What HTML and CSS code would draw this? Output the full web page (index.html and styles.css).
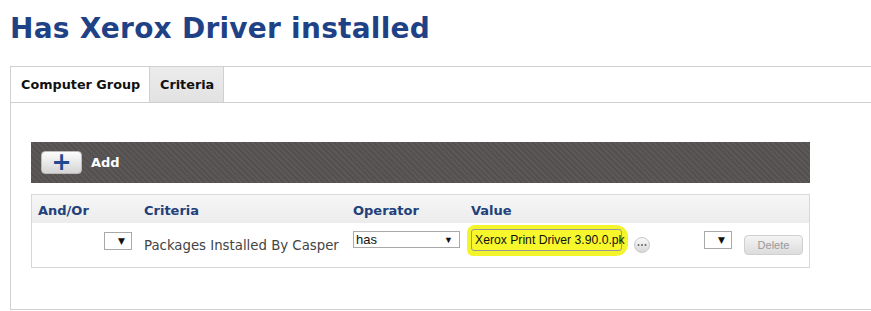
FILE: index.html
```html
<!DOCTYPE html>
<html>
<head>
	<title>Has Xerox Driver installed</title>
	<link rel="stylesheet" href="styles.css">
</head>
<body>

	<h1 class="page-title">Has Xerox Driver installed</h1>

	<div class="tabs">
		<ul class="tab-list">
			<li class="tab active">Computer Group</li>
			<li class="tab">Criteria</li>
		</ul>
		<div class="tab-panel">
			<div class="toolbar">
				<span class="add-btn"><span class="plus">+</span></span>
				<span class="add-label">Add</span>
			</div>

			<div class="criteria-table">
				<div class="row head">
					<div class="cell">And/Or</div>
					<div class="cell">Criteria</div>
					<div class="cell">Operator</div>
					<div class="cell">Value</div>
				</div>
				<div class="row body">
					<div class="cell andor"><span class="select small">&#9660;</span></div>
					<div class="cell crit">Packages Installed By Casper</div>
					<div class="cell"><span class="select op"><span>has</span><span class="arrow">&#9660;</span></span></div>
					<div class="cell value">
						<span class="highlight"><span class="text-input">Xerox Print Driver 3.90.0.pk</span></span>
						<span class="more">
							<svg width="10" height="4" viewBox="0 0 10 4">
								<circle cx="1.5" cy="2" r="1" fill="#666"/>
								<circle cx="5" cy="2" r="1" fill="#666"/>
								<circle cx="8.5" cy="2" r="1" fill="#666"/>
							</svg>
						</span>
						<span class="select small paren">&#9660;</span>
						<span class="delete-btn">Delete</span>
					</div>
				</div>
			</div>
		</div>
	</div>

</body>
</html>
```

FILE: styles.css
```css
*{
	box-sizing: border-box;
}
body{
	margin: 0;
	background: #fff;
	font-family: "DejaVu Sans", Verdana, sans-serif;
	height: 311px;
	overflow: hidden;
}
.page-title{
	margin: 0;
	padding: 11px 0 0 10px;
	font-size: 28px;
	font-weight: bold;
	line-height: 36px;
	color: #1f4287;
	letter-spacing: 0.25px;
}
.tabs{
	margin: 19px 0 0 10px;
	border-top: 1px solid #d0d0d0;
}
.tab-list{
	list-style: none;
	margin: 0;
	padding: 0;
	display: flex;
	border-bottom: 1px solid #d0d0d0;
	border-left: 1px solid #d0d0d0;
}
.tab{
	height: 35px;
	line-height: 36px;
	padding: 0 0 0 10px;
	white-space: nowrap;
	font-size: 12.8px;
	font-weight: bold;
	color: #111;
	border-right: 1px solid #d0d0d0;
}
.tab.active{
	width: 139px;
	background: #fff;
}
.tab:not(.active){
	width: 74px;
	background: linear-gradient(#ececec, #e2e2e2);
}
.tab-panel{
	border-left: 1px solid #d0d0d0;
	border-bottom: 1px solid #d0d0d0;
	height: 207px;
	padding: 39px 0 0 20px;
}
.toolbar{
	width: 779px;
	height: 41px;
	background: repeating-linear-gradient(45deg, #5c5857 0 2px, #54504f 2px 4px);
	display: flex;
	align-items: center;
	padding-left: 10px;
	gap: 9px;
}
.add-btn{
	width: 41px;
	height: 23px;
	border-radius: 4px;
	border: 1px solid #bbb;
	background: linear-gradient(#fdfdfd, #d4d4d4);
	display: flex;
	align-items: center;
	justify-content: center;
}
.plus{
	color: #1f4a8f;
	font-size: 24px;
	font-weight: bold;
	line-height: 20px;
	margin-top: -2px;
}
.add-label{
	color: #fff;
	font-weight: bold;
	font-size: 13px;
}
.criteria-table{
	margin-top: 11px;
	width: 779px;
	border: 1px solid #d8d8d8;
	height: 74px;
}
.row{
	display: grid;
	grid-template-columns: 106px 209px 118px 1fr;
	padding-left: 6px;
}
.row.head{
	height: 28px;
	align-items: center;
	background: linear-gradient(#f6f6f6, #ececec);
	font-size: 13px;
	font-weight: bold;
	color: #22407a;
	padding-top: 2px;
}
.row.body{
	height: 44px;
	align-items: start;
	padding-top: 6px;
}
.select{
	display: inline-flex;
	align-items: center;
	border: 1px solid #a9a9a9;
	background: #fff;
	font-size: 9px;
	color: #111;
	height: 18px;
}
.select.small{
	width: 28px;
	justify-content: flex-end;
	padding-right: 6px;
}
.andor{
	text-align: right;
	padding-right: 12px;
}
.crit{
	font-size: 13.3px;
	color: #444;
	padding-top: 9px;
}
.select.op{
	width: 107px;
	height: 17px;
	margin-top: 1px;
	justify-content: space-between;
	padding: 0 6px 0 2px;
	font-family: "Liberation Sans", Arial, sans-serif;
	font-size: 13px;
}
.select.op .arrow{
	font-size: 9px;
}
.value{
	display: flex;
	align-items: flex-start;
}
.highlight{
	margin: -4px 0 0 -4px;
	padding: 4px 6px 5px 4px;
	background: #f4f42a;
	border-radius: 8px 12px 12px 6px;
}
.text-input{
	display: block;
	width: 151px;
	height: 22px;
	line-height: 20px;
	border: 1px solid #999;
	border-radius: 3px;
	padding-left: 3px;
	white-space: nowrap;
	font-family: "Liberation Sans", Arial, sans-serif;
	font-size: 12.2px;
	color: #111;
	background: #f7f72c;
}
.more{
	display: flex;
	align-items: center;
	justify-content: center;
	width: 16px;
	height: 16px;
	margin: 8px 0 0 6px;
	border-radius: 50%;
	border: 1px solid #c8c8c8;
	background: linear-gradient(#fafafa, #d8d8d8);
}
.select.paren{
	margin: 2px 0 0 54px;
}
.delete-btn{
	margin: 6px 0 0 12px;
	width: 59px;
	height: 20px;
	line-height: 18px;
	border: 1px solid #d0d0d0;
	border-radius: 4px;
	background: linear-gradient(#f4f4f4, #dcdcdc);
	text-align: center;
	font-family: "Liberation Sans", Arial, sans-serif;
	font-size: 11px;
	color: #999;
}
```
